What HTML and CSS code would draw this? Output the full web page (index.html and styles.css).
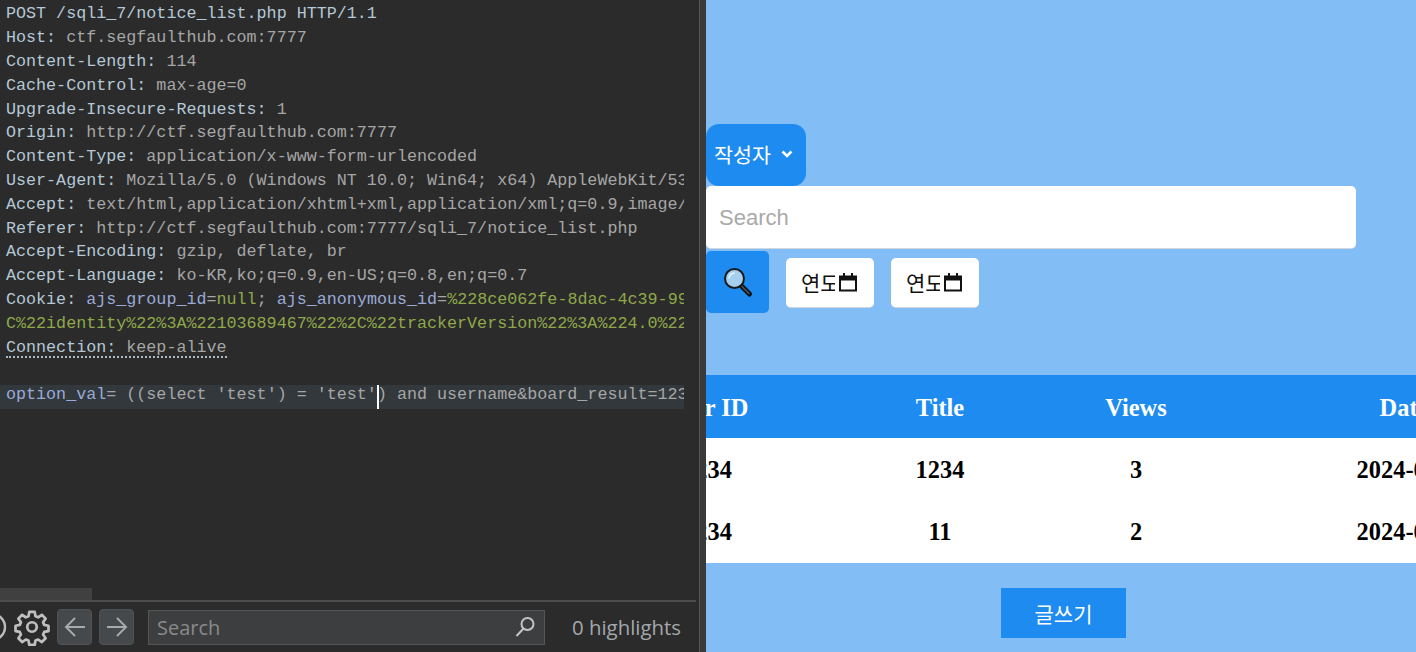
FILE: index.html
```html
<!DOCTYPE html>
<html lang="ko">
<head>
<meta charset="utf-8">
<title>Request</title>
<link rel="stylesheet" href="styles.css">
</head>
<body>
<div class="page">
  <section class="editor">
    <div class="code">
      <div class="line"><span class="hd">POST /sqli_7/notice_list.php HTTP/1.1</span></div>
      <div class="line"><span class="hd">Host:</span> ctf.segfaulthub.com:7777</div>
      <div class="line"><span class="hd">Content-Length:</span> 114</div>
      <div class="line"><span class="hd">Cache-Control:</span> max-age=0</div>
      <div class="line"><span class="hd">Upgrade-Insecure-Requests:</span> 1</div>
      <div class="line"><span class="hd">Origin:</span> http://ctf.segfaulthub.com:7777</div>
      <div class="line"><span class="hd">Content-Type:</span> application/x-www-form-urlencoded</div>
      <div class="line"><span class="hd">User-Agent:</span> Mozilla/5.0 (Windows NT 10.0; Win64; x64) AppleWebKit/537.36</div>
      <div class="line"><span class="hd">Accept:</span> text/html,application/xhtml+xml,application/xml;q=0.9,image/avif</div>
      <div class="line"><span class="hd">Referer:</span> http://ctf.segfaulthub.com:7777/sqli_7/notice_list.php</div>
      <div class="line"><span class="hd">Accept-Encoding:</span> gzip, deflate, br</div>
      <div class="line"><span class="hd">Accept-Language:</span> ko-KR,ko;q=0.9,en-US;q=0.8,en;q=0.7</div>
      <div class="line"><span class="hd">Cookie:</span> <span class="ck">ajs_group_id</span>=<span class="cv">null</span>; <span class="ck">ajs_anonymous_id</span>=<span class="cv">%228ce062fe-8dac-4c39-9900</span></div>
      <div class="line"><span class="cv">C%22identity%22%3A%22103689467%22%2C%22trackerVersion%22%3A%224.0%22%7D</span></div>
      <div class="line"><span class="dotted"><span class="hd">Connection:</span> keep-alive</span></div>
      <div class="line">&nbsp;</div>
      <div class="line current"><span class="ck">option_val</span>= ((select 'test') = 'test'<span class="caret"></span>) and username&amp;board_result=1234</div>
    </div>
    <div class="hscroll"><div class="hthumb"></div></div>
    <div class="toolbar">
      <svg class="help" width="8" height="32" viewBox="0 0 8 32"><circle cx="-8" cy="16" r="13" fill="none" stroke="#bdbdbd" stroke-width="2.4"/></svg>
      <svg class="gear" width="38" height="38" viewBox="0 0 24 24" fill="none" stroke="#c0c0c0" stroke-width="1.7" stroke-linejoin="round"><circle cx="12" cy="12" r="3"/><path d="M10.300 2.500h3.400l.5 2.700 1.700.7 2.300-1.600 2.400 2.400-1.600 2.300.7 1.700 2.700.5v3.400l-2.700.5-.7 1.700 1.600 2.300-2.400 2.400-2.300-1.600-1.700.7-.5 2.700h-3.400l-.5-2.700-1.700-.7-2.300 1.600-2.400-2.400 1.600-2.300-.7-1.700-2.700-.5v-3.400l2.700-.5.7-1.700-1.600-2.300 2.400-2.400 2.300 1.600 1.700-.7z"/></svg>
      <button class="nav"><svg width="24" height="24" viewBox="0 0 24 24" fill="none" stroke="#a7a9aa" stroke-width="2"><path d="M22 12H3M12 3l-9 9 9 9"/></svg></button>
      <button class="nav"><svg width="24" height="24" viewBox="0 0 24 24" fill="none" stroke="#a7a9aa" stroke-width="2"><path d="M2 12h19M12 3l9 9-9 9"/></svg></button>
      <div class="find">
        <span class="find-text">Search</span>
        <svg width="22" height="22" viewBox="0 0 22 22" fill="none" stroke="#c4c4c4" stroke-width="2"><circle cx="13.500" cy="8" r="6"/><path d="M9.500 12.500 2.500 20"/></svg>
      </div>
      <span class="count">0 highlights</span>
    </div>
  </section>
  <div class="divider"></div>
  <main class="site">
    <div class="select"><span>작성자</span><svg width="12" height="8" viewBox="0 0 12 8" fill="none" stroke="#fff" stroke-width="2.6"><path d="M1.500 1.500 6 6l4.500-4.500"/></svg></div>
    <input class="search" type="text" placeholder="Search">
    <div class="filters">
      <button class="go"><svg width="32" height="32" viewBox="0 0 32 32"><path d="M18.500 19 27.500 28" stroke="#111" stroke-width="5" stroke-linecap="round"/><path d="M20 20.500 27 27.500" stroke="#4a5a66" stroke-width="1.500" stroke-linecap="round"/><circle cx="12.500" cy="12.500" r="9.500" fill="#a5cfee" stroke="#1a1a1a" stroke-width="2"/><path d="M7 12.500a5.500 5.500 0 0 1 5.500-5.500" stroke="#dcefff" stroke-width="2" fill="none"/></svg></button>
      <div class="date"><span class="date-text">연도</span><svg width="20" height="20" viewBox="0 0 20 20" fill="none" stroke="#111"><path d="M2 4.500h16v14H2z" stroke-width="2"/><path d="M2 6.500h16" stroke-width="4"/><path d="M6 1v3M14 1v3" stroke-width="2"/></svg></div>
      <div class="date"><span class="date-text">연도</span><svg width="20" height="20" viewBox="0 0 20 20" fill="none" stroke="#111"><path d="M2 4.500h16v14H2z" stroke-width="2"/><path d="M2 6.500h16" stroke-width="4"/><path d="M6 1v3M14 1v3" stroke-width="2"/></svg></div>
    </div>
    <table class="board">
      <colgroup><col class="c1"><col class="c2"><col class="c3"><col class="c4"></colgroup>
      <thead><tr><th>User ID</th><th>Title</th><th>Views</th><th class="th-date">Date</th></tr></thead>
      <tbody>
        <tr><td>1234</td><td>1234</td><td>3</td><td class="td-date">2024-05-14</td></tr>
        <tr><td>1234</td><td>11</td><td>2</td><td class="td-date">2024-05-14</td></tr>
      </tbody>
    </table>
    <div class="actions"><button class="write">글쓰기</button></div>
  </main>
</div>
</body>
</html>
```

FILE: styles.css
```css
* { box-sizing: border-box; }
html, body { margin: 0; height: 100%; overflow: hidden; }
.page { display: flex; width: 1416px; height: 652px; }

.editor { width: 699px; height: 652px; background: #2b2b2b; display: flex; flex-direction: column; flex: none; }
.code { flex: 1; min-height: 0; width: 684px; overflow: hidden; padding-top: 2.4px; font: 16.72px/23.8px "Liberation Mono", monospace; color: #a6a6a6; }
.line { height: 23.8px; padding-left: 6px; white-space: pre; overflow: hidden; }
.hd { color: #b4c8d6; }
.ck { color: #9aaad8; }
.cv { color: #8fa84a; }
.dotted { border-bottom: 2px dotted #a8b8c4; display: inline-block; height: 22.5px; }
.current { height: 26px; background: linear-gradient(#33383c, #33383c) 0 2px no-repeat; }
.caret { display: inline-block; width: 0; height: 24px; margin-top: 2px; border-left: 2px solid #fff; margin-right: -2px; vertical-align: top; }
.hscroll { height: 12px; flex: none; }
.hthumb { width: 92px; height: 12px; background: #404040; }
.toolbar { height: 52px; width: 696px; flex: none; border-top: 2px solid #4d4d4d; display: flex; align-items: center; }
.help { flex: none; margin-right: 5px; }
.gear { flex: none; }
.nav { width: 35px; height: 36px; margin-left: 7px; padding: 0; background: #45494b; border: 1px solid #4f5355; border-radius: 4px; display: flex; align-items: center; justify-content: center; flex: none; }
.gear + .nav { margin-left: 6px; }
.find { width: 397px; height: 35px; margin-left: 14px; background: #3c3e40; border: 1px solid #555; display: flex; align-items: center; justify-content: space-between; padding: 0 8px; flex: none; }
.find-text { font: 20px "Open Sans", sans-serif; color: #8a8a8a; }
.count { margin-left: 27px; font: 20.4px "Open Sans", sans-serif; color: #a4a8ac; white-space: nowrap; }

.divider { width: 7px; flex: none; background: #3a3a3a; border-left: 1px solid #555; }

.site { flex: 1; min-width: 0; height: 652px; overflow: hidden; background: #83bdf6; padding-top: 124px; font-family: "Noto Sans CJK KR", sans-serif; }
.select { width: 100px; height: 62px; background: #1e8bf1; border-radius: 13px; color: #fff; font-size: 20.6px; display: flex; align-items: center; padding: 0 0 2px 8px; gap: 9px; }
.select svg { margin-left: 1px; }
.search { display: block; width: 650px; height: 63px; margin-top: 0; padding: 2px 13px 0; border: 0; border-bottom: 1px solid #cfd6dd; border-radius: 5px; background: #fff; font: 22px "Liberation Sans", sans-serif; outline: none; }
.search::placeholder { color: #a9a9a9; opacity: 1; }
.filters { display: flex; align-items: center; margin-top: 2px; }
.go { width: 63px; height: 62px; padding: 0; border: 0; background: #1e8bf1; border-radius: 5px; display: flex; align-items: center; justify-content: center; margin-right: 17px; }
.date { width: 88px; height: 50px; margin-top: 1px; background: #fff; border-radius: 5px; border-bottom: 1px solid #cfd6dd; margin-right: 17px; display: flex; align-items: center; padding-left: 15px; font-size: 21px; color: #111; }
.date-text { display: block; width: 34px; overflow: hidden; white-space: nowrap; flex: none; }
.date svg { margin-left: 3px; flex: none; }

.board { table-layout: fixed; width: 1016px; margin: 62px 0 0 -106px; border-collapse: collapse; font: bold 24.4px "Liberation Serif", serif; }
.c1 { width: 215px; }
.c2 { width: 250px; }
.c3 { width: 142px; }
.c4 { width: 409px; }
.board th { height: 63px; padding: 2px 0 0; background: #1e8bf1; color: #fff; text-align: center; white-space: nowrap; }
.board th.th-date { padding-right: 15px; }
.board td { height: 62px; padding: 1px 0 0; background: #fff; color: #000; text-align: center; white-space: nowrap; }
.board td.td-date { padding-left: 4px; }
.board tr:last-child td { height: 63px; }
.actions { display: flex; margin-top: 25px; padding-left: 295px; }
.write { width: 125px; height: 50px; border: 0; padding: 0; background: #1e8bf1; color: #fff; font: 21px "Noto Sans CJK KR", sans-serif; }
```
